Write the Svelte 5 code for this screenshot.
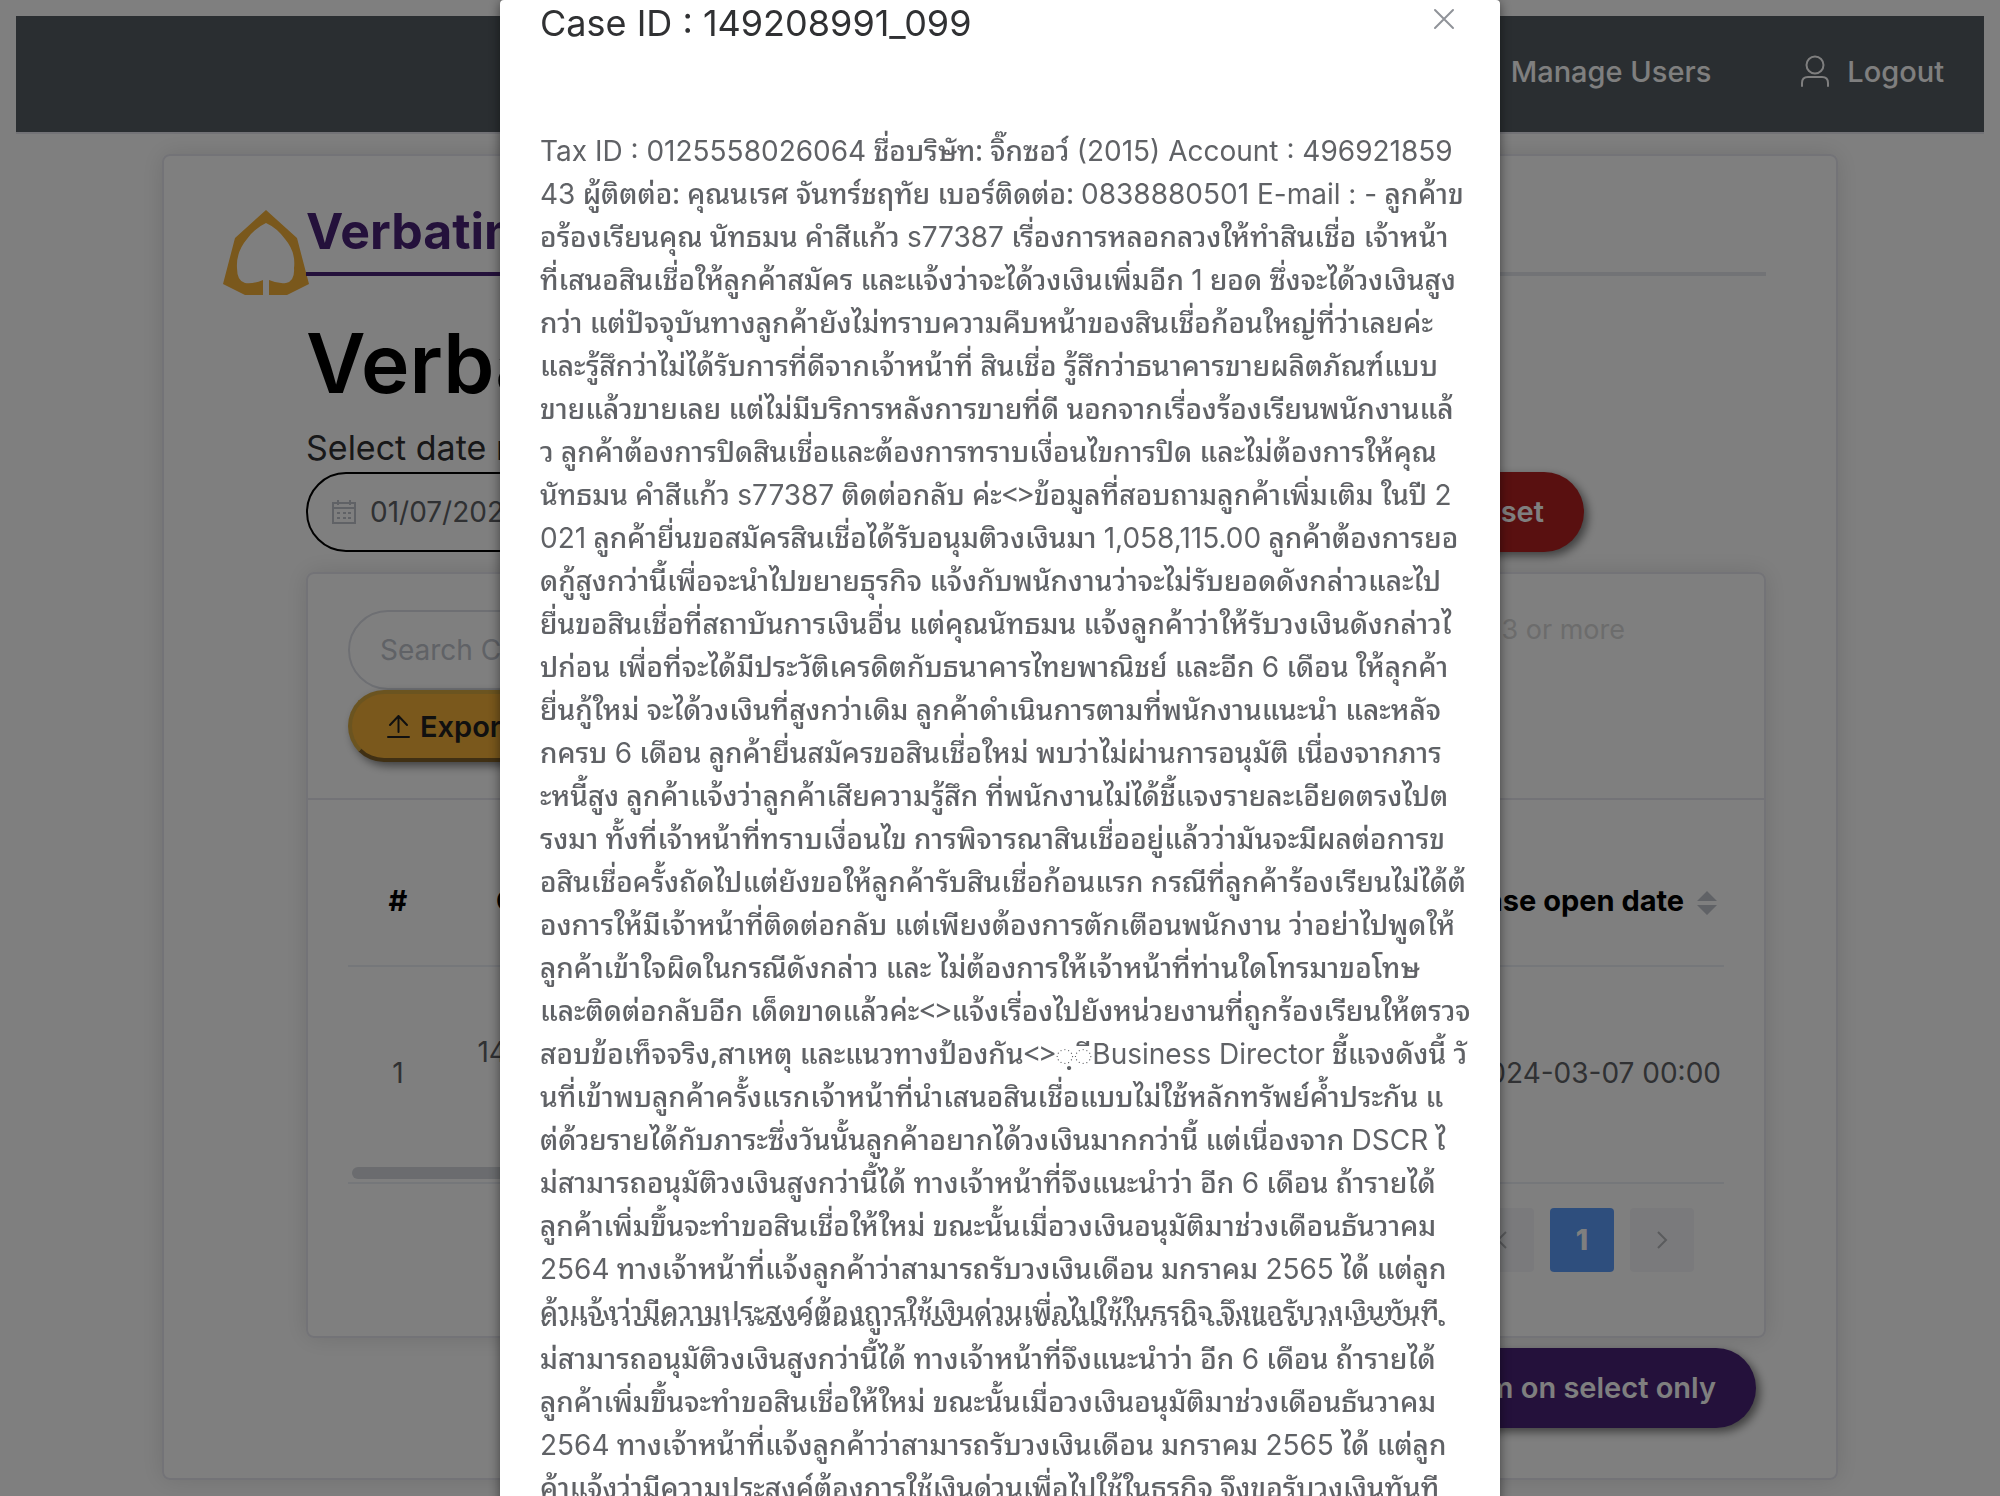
<script>
  const caseId = '149208991_099';

  const opening = [
    'Tax ID : 0125558026064 ชื่อบริษัท: จิ๊กซอว์ (2015) Account : 496921859',
    '43 ผู้ติตต่อ: คุณนเรศ จันทร์ชฤทัย เบอร์ติดต่อ: 0838880501 E-mail : - ลูกค้าข',
    'อร้องเรียนคุณ นัทธมน คำสีแก้ว s77387 เรื่องการหลอกลวงให้ทำสินเชื่อ เจ้าหน้า',
    'ที่เสนอสินเชื่อให้ลูกค้าสมัคร และแจ้งว่าจะได้วงเงินเพิ่มอีก 1 ยอด ซึ่งจะได้วงเงินสูง',
    'กว่า แต่ปัจจุบันทางลูกค้ายังไม่ทราบความคืบหน้าของสินเชื่อก้อนใหญ่ที่ว่าเลยค่ะ',
    'และรู้สึกว่าไม่ได้รับการที่ดีจากเจ้าหน้าที่ สินเชื่อ รู้สึกว่าธนาคารขายผลิตภัณฑ์แบบ',
    'ขายแล้วขายเลย แต่ไม่มีบริการหลังการขายที่ดี นอกจากเรื่องร้องเรียนพนักงานแล้',
    'ว ลูกค้าต้องการปิดสินเชื่อและต้องการทราบเงื่อนไขการปิด และไม่ต้องการให้คุณ',
    'นัทธมน คำสีแก้ว s77387 ติดต่อกลับ ค่ะ<>ข้อมูลที่สอบถามลูกค้าเพิ่มเติม ในปี 2',
    '021 ลูกค้ายื่นขอสมัครสินเชื่อได้รับอนุมติวงเงินมา 1,058,115.00 ลูกค้าต้องการยอ',
    'ดกู้สูงกว่านี้เพื่อจะนำไปขยายธุรกิจ แจ้งกับพนักงานว่าจะไม่รับยอดดังกล่าวและไป',
    'ยื่นขอสินเชื่อที่สถาบันการเงินอื่น แต่คุณนัทธมน แจ้งลูกค้าว่าให้รับวงเงินดังกล่าวไ',
    'ปก่อน เพื่อที่จะได้มีประวัติเครดิตกับธนาคารไทยพาณิชย์ และอีก 6 เดือน ให้ลุกค้า',
    'ยื่นกู้ใหม่ จะได้วงเงินที่สูงกว่าเดิม ลูกค้าดำเนินการตามที่พนักงานแนะนำ และหลัจ',
    'กครบ 6 เดือน ลูกค้ายื่นสมัครขอสินเชื่อใหม่ พบว่าไม่ผ่านการอนุมัติ เนื่องจากภาร',
    'ะหนี้สูง ลูกค้าแจ้งว่าลูกค้าเสียความรู้สึก ที่พนักงานไม่ได้ชี้แจงรายละเอียดตรงไปต',
    'รงมา ทั้งที่เจ้าหน้าที่ทราบเงื่อนไข การพิจารณาสินเชื่ออยู่แล้วว่ามันจะมีผลต่อการข',
    'อสินเชื่อครั้งถัดไปแต่ยังขอให้ลูกค้ารับสินเชื่อก้อนแรก กรณีที่ลูกค้าร้องเรียนไม่ได้ต้',
    'องการให้มีเจ้าหน้าที่ติดต่อกลับ แต่เพียงต้องการตักเตือนพนักงาน ว่าอย่าไปพูดให้',
    'ลูกค้าเข้าใจผิดในกรณีดังกล่าว และ ไม่ต้องการให้เจ้าหน้าที่ท่านใดโทรมาขอโทษ',
    'และติดต่อกลับอีก เด็ดขาดแล้วค่ะ<>แจ้งเรื่องไปยังหน่วยงานที่ถูกร้องเรียนให้ตรวจ',
    'สอบข้อเท็จจริง,สาเหตุ และแนวทางป้องกัน<>\u25cc\u0e3a\u25cc\u0e35Business Director ชี้แจงดังนี้ วั',
    'นที่เข้าพบลูกค้าครั้งแรกเจ้าหน้าที่นำเสนอสินเชื่อแบบไม่ใช้หลักทรัพย์ค้ำประกัน แ'
  ];

  const closing = [
    'ต่ด้วยรายได้กับภาระซึ่งวันนั้นลูกค้าอยากได้วงเงินมากกว่านี้ แต่เนื่องจาก DSCR ไ',
    'ม่สามารถอนุมัติวงเงินสูงกว่านี้ได้ ทางเจ้าหน้าที่จึงแนะนำว่า อีก 6 เดือน ถ้ารายได้',
    'ลูกค้าเพิ่มขึ้นจะทำขอสินเชื่อให้ใหม่ ขณะนั้นเมื่อวงเงินอนุมัติมาช่วงเดือนธันวาคม',
    '2564 ทางเจ้าหน้าที่แจ้งลูกค้าว่าสามารถรับวงเงินเดือน มกราคม 2565 ได้ แต่ลูก',
    'ค้าแจ้งว่ามีความประสงค์ต้องการใช้เงินด่วนเพื่อไปใช้ในธุรกิจ จึงขอรับวงเงินทันที'
  ];

  // Splits a line into alternating runs; the odd entries are Latin words and numbers.
  const runs = (line) => line.split(/([A-Za-z0-9(](?:[A-Za-z0-9 :(),.-]*[A-Za-z0-9):-])?)/);
</script>

{#snippet text(line)}
  <p>{#each runs(line) as run, i}{#if i % 2}<span class="latin">{run}</span>{:else}{run}{/if}{/each}</p>
{/snippet}

<div class="page" inert>
  <header class="topbar">
    <nav>
      <a href="#users">Manage Users</a>
      <a href="#logout" class="logout">
        <svg width="32" height="34" viewBox="0 0 32 34" fill="none" stroke="currentColor" stroke-width="2" stroke-linecap="round">
          <circle cx="16" cy="11" r="8.5" />
          <path d="M3 32v-3q0-6 6-6h14q6 0 6 6v3" />
        </svg>
        Logout
      </a>
    </nav>
  </header>

  <main class="card">
    <svg class="logo" width="86" height="86" viewBox="0 0 86 86">
      <path fill="#f4b038" fill-rule="evenodd" d="M43 0 74 28 86 74 64 85H46V70Q55 74 63 73Q72 71 71 58Q73 42 62 29Q54 18 43 13Q32 18 24 29Q13 42 14 58Q14 71 22 73Q31 74 40 70V85H22L0 74 12 28Z" />
    </svg>
    <div class="content">
      <div class="tabs"><a href="#verbatim">Verbatim Analysis</a></div>
      <h1>Verbatim</h1>
      <label class="range-label" for="range">Select date range</label>
      <div class="filters">
        <div class="date">
          <svg width="26" height="26" viewBox="0 0 26 26" fill="none" stroke="#c0c4cc" stroke-width="2">
            <path d="M2 4h22v20H2zM2 9h22M7 1v5M19 1v5M6 14h3M12 14h3M17 14h3M6 19h3M12 19h3M17 19h3" />
          </svg>
          <input id="range" value="01/07/2023" />
        </div>
        <button class="pill reset">Reset</button>
      </div>

      <section class="panel">
        <div class="tools">
          <div class="tool-left">
            <input class="search" aria-label="Search" placeholder="Search Case ID" />
            <button class="export">
              <svg width="26" height="26" viewBox="0 0 26 26" fill="none" stroke="currentColor" stroke-width="2" stroke-linecap="round" stroke-linejoin="round">
                <path d="M2 24h21M12.500 19V3M4 12l8.500-9 8.500 9" />
              </svg>
              Export
            </button>
          </div>
          <span class="hint">3 or more</span>
        </div>
        <div class="grid">
          <table>
            <thead>
              <tr>
                <th class="num">#</th>
                <th class="case">Case ID</th>
                <th class="open">
                  Case open date
                  <svg width="20" height="24" viewBox="0 0 20 24" fill="#c0c4cc"><path d="M10 0 20 10H0zM0 14h20L10 24z" /></svg>
                </th>
              </tr>
            </thead>
            <tbody>
              <tr>
                <td class="num">1</td>
                <td class="case">149208991<br />_099</td>
                <td class="open">2024-03-07 00:00</td>
              </tr>
            </tbody>
          </table>
          <div class="scroll"></div>
          <div class="pages">
            <button aria-label="Previous"><svg width="14" height="20" viewBox="0 0 14 20"><path d="M11 2 3 10l8 8" /></svg></button>
            <button class="current">1</button>
            <button aria-label="Next"><svg width="14" height="20" viewBox="0 0 14 20"><path d="M3 2l8 8-8 8" /></svg></button>
          </div>
        </div>
      </section>
      <div class="actions"><button class="pill confirm">Confirm on select only</button></div>
    </div>
  </main>
</div>

<div class="overlay">
  <div class="modal" role="dialog" aria-modal="true" aria-labelledby="case-title">
    <div class="modal-head">
      <h2 id="case-title">Case ID : {caseId}</h2>
      <button class="close" aria-label="Close">
        <svg width="22" height="22" viewBox="0 0 22 22" fill="none" stroke="#909399" stroke-width="2" stroke-linecap="round"><path d="M2 2l18 18M20 2 2 20" /></svg>
      </button>
    </div>
    <div class="part first">
      <div class="lines">
        {#each [...opening, ...closing] as line}{@render text(line)}{/each}
      </div>
    </div>
    <div class="part repeat">
      <div class="lines">
        {#each closing as line}{@render text(line)}{/each}
      </div>
    </div>
  </div>
</div>

<style>
  :global(body) {
    overflow: hidden;
    background: #fff;
    font-family: Inter, 'Noto Sans', sans-serif;
    font-size: 28px;
    color: #303133;
  }
  * { box-sizing: border-box; }
  button, input { font: inherit; }
  h1, h2, p { margin: 0; }
  .page { padding: 16px; }
  .topbar {
    height: 118px;
    background: #545c62;
    border-bottom: 2px solid #e6e6ee;
    padding: 0 40px;
  }
  nav {
    display: flex;
    justify-content: flex-end;
    align-items: center;
    gap: 88px;
    height: 110px;
    font-size: 29px;
    font-weight: 500;
  }
  nav a {
    display: flex;
    align-items: center;
    gap: 16px;
    color: #fff;
    text-decoration: none;
  }
  .card {
    display: flex;
    margin: 20px 146px 0;
    height: 1326px;
    border: 2px solid #e6e6ee;
    border-radius: 8px;
    padding: 54px 70px 0 59px;
    box-shadow: 0 0 24px rgba(0, 0, 0, 0.12);
  }
  .logo { flex: none; margin-right: -3px; }
  .content { flex: 1; min-width: 0; }
  .tabs {
    height: 66px;
    border-bottom: 4px solid #e4e7ed;
  }
  .tabs a {
    display: inline-block;
    height: 66px;
    border-bottom: 4px solid #482276;
    color: #482276;
    font-size: 50px;
    font-weight: 700;
    line-height: 42px;
    text-decoration: none;
  }
  h1 {
    padding-top: 40px;
    color: #000;
    font-size: 82px;
    font-weight: 600;
    line-height: 96px;
  }
  .range-label {
    display: block;
    padding-top: 12px;
    font-size: 34px;
    line-height: 48px;
  }
  .filters {
    display: flex;
    justify-content: space-between;
    padding-right: 182px;
  }
  .date {
    display: flex;
    align-items: center;
    gap: 13px;
    width: 700px;
    height: 80px;
    border: 2px solid #000;
    border-radius: 40px;
    padding: 0 23px;
  }
  .date input {
    flex: 1;
    border: 0;
    padding: 0;
    background: none;
    color: #606266;
  }
  .pill {
    height: 80px;
    border: 0;
    border-radius: 40px;
    padding: 0 40px 2px;
    color: #fff;
    font-weight: 600;
    font-size: 29px;
    box-shadow: 4px 4px 10px rgba(0, 0, 0, 0.5);
  }
  .reset { background: #b22020; }
  .confirm { background: #482276; }
  .panel {
    margin-top: 20px;
    height: 766px;
    border: 2px solid #e6e6ee;
    border-radius: 8px;
    box-shadow: 0 0 24px rgba(0, 0, 0, 0.12);
  }
  .tools {
    display: flex;
    justify-content: space-between;
    height: 226px;
    border-bottom: 2px solid #e6e6ee;
    padding: 36px 139px 0 40px;
  }
  .tool-left {
    display: flex;
    flex-direction: column;
    align-items: flex-start;
  }
  .search {
    width: 400px;
    height: 80px;
    border: 2px solid #dcdfe6;
    border-radius: 40px;
    padding: 0 30px;
    background: none;
  }
  .search::placeholder { color: #c0c4cc; }
  .export {
    display: flex;
    align-items: center;
    gap: 8px;
    height: 72px;
    border: 4px solid;
    border-color: #d6a840 #806028 #806028 #d6a840;
    border-radius: 36px;
    padding: 0 34px;
    background: #f4b038;
    color: #202020;
    font-size: 29px;
    font-weight: 600;
    box-shadow: 4px 4px 10px rgba(0, 0, 0, 0.5);
  }
  .hint {
    color: #d8d8d8;
    font-size: 27px;
    line-height: 40px;
  }
  .grid { padding: 0 40px; }
  table {
    width: 100%;
    border-collapse: collapse;
  }
  th {
    height: 166px;
    border-bottom: 2px solid #ebeef5;
    padding: 36px 0 0;
    color: #000;
    font-size: 29px;
    font-weight: 700;
  }
  td {
    height: 201px;
    padding: 12px 0 0;
    color: #606266;
    text-align: center;
  }
  .num { width: 100px; }
  .case { width: 204px; line-height: 42px; }
  th.open { padding-right: 7px; text-align: right; }
  td.open { padding-right: 3px; text-align: right; }
  th svg { margin-left: 6px; vertical-align: -4px; }
  .scroll {
    width: 60%;
    height: 12px;
    margin-left: 4px;
    border-radius: 6px;
    background: #d6d9de;
  }
  .pages {
    display: flex;
    justify-content: flex-end;
    gap: 16px;
    margin-top: 3px;
    border-top: 2px solid #ebeef5;
    padding: 24px 30px 0;
  }
  .pages button {
    width: 64px;
    height: 64px;
    border: 0;
    border-radius: 4px;
    background: #f4f5f8;
    color: #fff;
    font-weight: 800;
  }
  .pages .current { background: #5c9cfa; }
  .pages path { fill: none; stroke: #b4b6ba; stroke-width: 2; }
  .actions {
    display: flex;
    justify-content: flex-end;
    padding: 10px 10px 0;
  }
  .overlay {
    position: fixed;
    inset: 0;
    background: rgba(0, 0, 0, 0.5);
  }
  .modal {
    width: 50%;
    min-height: 100%;
    margin: 0 auto;
    border-radius: 4px 4px 0 0;
    background: #fff;
    box-shadow: 0 2px 12px rgba(0, 0, 0, 0.5);
  }
  .modal-head {
    display: flex;
    justify-content: space-between;
    align-items: flex-start;
    height: 127px;
    padding: 0 45px 0 40px;
  }
  h2 {
    font-size: 36px;
    font-weight: 400;
    line-height: 46px;
  }
  .close {
    border: 0;
    padding: 8px 0;
    background: none;
    line-height: 0;
  }
  .part {
    overflow: hidden;
    padding: 0 0 0 40px;
    color: #606266;
    font-family: 'Noto Sans Thai Looped', 'Noto Looped Thai', Loma, 'Noto Sans Thai', Inter, sans-serif;
    font-size: 28px;
    font-weight: 500;
    line-height: 43px;
    white-space: nowrap;
  }
  .first .lines { margin-bottom: -11px; }
  .repeat .lines { margin-top: -28px; }
  .lines p { height: 43px; }
  .latin {
    font-family: Inter, sans-serif;
    font-weight: 400;
  }
</style>
